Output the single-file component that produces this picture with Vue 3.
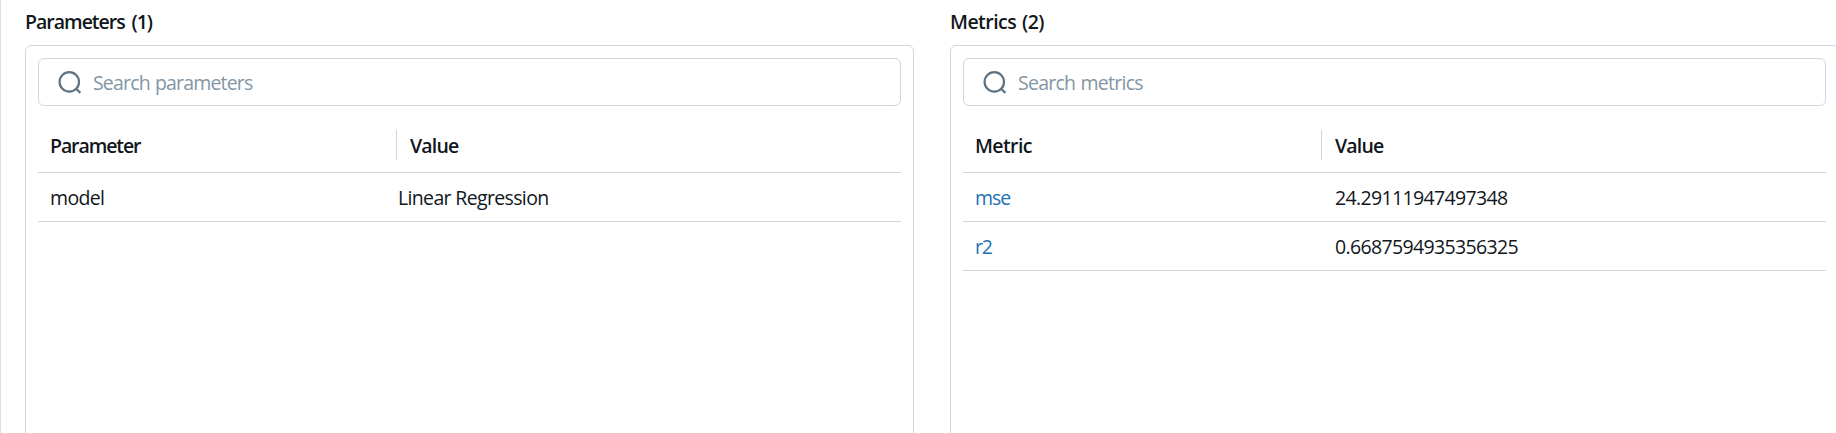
<script setup>
const panels = [
  {
    id: 'parameters',
    title: 'Parameters (1)',
    placeholder: 'Search parameters',
    heading: 'Parameter',
    rows: [{ name: 'model', value: 'Linear Regression' }],
  },
  {
    id: 'metrics',
    title: 'Metrics (2)',
    placeholder: 'Search metrics',
    heading: 'Metric',
    rows: [
      { name: 'mse', value: '24.29111947497348' },
      { name: 'r2', value: '0.6687594935356325' },
    ],
  },
]
</script>

<template>
  <main class="page">
    <section v-for="panel in panels" :key="panel.id" class="section" :class="panel.id">
      <h4 class="title"><span>{{ panel.title }}</span></h4>
      <div class="panel">
        <label class="search">
          <svg class="icon" width="24" height="24" viewBox="0 0 24 24" fill="none">
            <circle cx="11.3" cy="11.9" r="9.7" />
            <path d="M18.2 18.8L22.3 22.9" />
          </svg>
          <span class="placeholder">{{ panel.placeholder }}</span>
        </label>
        <div class="row head">
          <div class="cell name"><span>{{ panel.heading }}</span></div>
          <div class="cell value"><span>Value</span></div>
        </div>
        <div v-for="row in panel.rows" :key="row.name" class="row">
          <div class="cell name"><span>{{ row.name }}</span></div>
          <div class="cell value"><span>{{ row.value }}</span></div>
        </div>
      </div>
    </section>
  </main>
</template>

<style>
body {
  overflow: hidden;
  background: #fff;
}
</style>

<style scoped>
.page {
  box-sizing: border-box;
  display: flex;
  gap: 36px;
  height: 433px;
  padding-left: 24px;
  border-left: 1px solid #e0e0e0;
  overflow: hidden;
  font-family: "Open Sans", "Noto Sans", sans-serif;
  font-size: 19.5px;
  line-height: 30px;
  color: #11171c;
  white-space: nowrap;
}
.section {
  flex: 0 0 889px;
}
.title {
  height: 45px;
  margin: 0;
  padding-top: 7px;
  box-sizing: border-box;
  font-size: 19.5px;
  font-weight: 600;
  letter-spacing: -0.55px;
  word-spacing: 1.5px;
}
.parameters .title {
  letter-spacing: -1px;
  word-spacing: 2.7px;
}
.panel {
  box-sizing: border-box;
  height: 420px;
  padding: 12px;
  border: 1px solid #cdd7e0;
  border-radius: 6px;
}
.search {
  box-sizing: border-box;
  display: flex;
  align-items: center;
  height: 48px;
  padding-left: 19px;
  border: 1px solid #cdd7e0;
  border-radius: 6px;
}
.icon {
  flex: none;
  margin-right: 11px;
  stroke: #5f7281;
  stroke-width: 2.2;
}
.placeholder {
  padding-top: 2px;
  color: #8396a5;
  letter-spacing: -0.75px;
  word-spacing: 1px;
}
.parameters .placeholder {
  letter-spacing: -0.83px;
}
.row {
  box-sizing: border-box;
  display: flex;
  align-items: center;
  height: 49px;
  padding-top: 2px;
  border-bottom: 1px solid #cdd7e0;
}
.head {
  height: 67px;
  padding-top: 11px;
  font-weight: 600;
}
.cell {
  letter-spacing: -0.65px;
}
.head .cell span {
  display: block;
  padding-top: 2px;
  line-height: 28px;
}
.head .value {
  letter-spacing: -0.8px;
}
.name {
  box-sizing: border-box;
  flex: 0 0 358px;
  padding-left: 12px;
}
.parameters .head .name {
  letter-spacing: -1.1px;
}
.metrics .head .name {
  letter-spacing: -0.6px;
}
.value {
  padding-left: 14px;
}
.head .value {
  padding-left: 13px;
  border-left: 1px solid #cdd7e0;
}
.parameters .row:not(.head) .value {
  padding-left: 2px;
}
.metrics .row:not(.head) .name {
  color: #2272b4;
  letter-spacing: -1.1px;
}
</style>
